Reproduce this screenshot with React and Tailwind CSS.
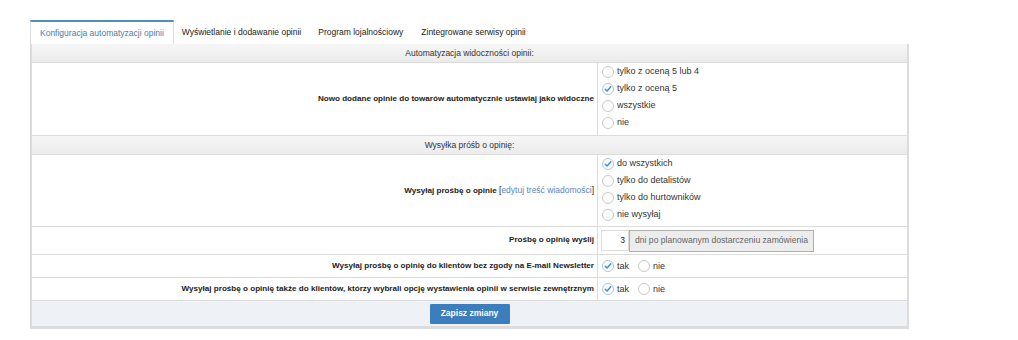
import React from "react";

function Radio({ checked }) {
  return (
    <span
      className={`inline-flex items-center justify-center w-[12px] h-[12px] rounded-full border bg-white shrink-0 ${
        checked ? "border-[#a9c6e3]" : "border-[#c9c9c9]"
      }`}
    >
      {checked && (
        <svg width="8" height="8" viewBox="0 0 8 8">
          <path d="M1.2 4.2 L3.1 6 L6.8 1.8" fill="none" stroke="#3d8bd0" strokeWidth="1.4" strokeLinecap="round" strokeLinejoin="round" />
        </svg>
      )}
    </span>
  );
}

function Opt({ checked, label }) {
  return (
    <div className="flex items-center h-[17px] gap-[3px]">
      <Radio checked={checked} />
      <span className="text-[#333] text-[9px]">{label}</span>
    </div>
  );
}

function Header({ children }) {
  return (
    <div className="h-[19px] flex items-center justify-center bg-gradient-to-b from-[#f6f6f6] to-[#ebebeb] border-b border-[#dcdcdc] text-[#333]">
      {children}
    </div>
  );
}

function Row({ label, children, h, valueClass = "" }) {
  return (
    <div className={`flex border-b border-[#dcdcdc] ${h}`}>
      <div className="w-[566px] shrink-0 flex items-center justify-end pr-[3px] border-r border-[#dcdcdc] font-bold text-[#222] text-[8.1px]">
        {label}
      </div>
      <div className={`flex-1 pl-[4px] ${valueClass}`}>{children}</div>
    </div>
  );
}

function YesNo() {
  return (
    <div className="flex items-center h-full gap-[9px]">
      <Opt checked label="tak" />
      <Opt label="nie" />
    </div>
  );
}

export default function App() {
  return (
    <div className="bg-white w-[1018px] h-[340px] pt-[20px] pl-[30px] text-[8.5px] leading-none" style={{ fontFamily: '"Liberation Sans", Arial, sans-serif' }}>
      <div className="w-[879px]">
        <div className="flex h-[24px]">
          <div className="h-full px-[9px] flex items-center border-t-2 border-t-[#4f8fc0] border-x border-x-[#dcdcdc] bg-white text-[#4a7db0]">
            Konfiguracja automatyzacji opinii
          </div>
          <div className="h-full px-[8px] flex items-center text-[#222]">Wyświetlanie i dodawanie opinii</div>
          <div className="h-full px-[9px] flex items-center text-[#222]">Program lojalnościowy</div>
          <div className="h-full px-[9px] flex items-center text-[#222]">Zintegrowane serwisy opinii</div>
        </div>
        <div className="border-l-2 border-r-2 border-b-[3px] border-[#dcdcdc]">
          <Header>Automatyzacja widoczności opinii:</Header>
          <Row label="Nowo dodane opinie do towarów automatycznie ustawiaj jako widoczne" h="h-[73px]">
            <Opt label="tylko z oceną 5 lub 4" />
            <Opt checked label="tylko z oceną 5" />
            <Opt label="wszystkie" />
            <Opt label="nie" />
          </Row>
          <Header>Wysyłka próśb o opinię:</Header>
          <Row
            label={
              <span>
                Wysyłaj prośbę o opinie{" "}
                <span className="font-normal text-[#222] text-[8.5px]">[</span>
                <span className="font-normal text-[#5b86c0] text-[8.5px]">edytuj treść wiadomości</span>
                <span className="font-normal text-[#222] text-[8.5px]">]</span>
              </span>
            }
            h="h-[72px]"
          >
            <Opt checked label="do wszystkich" />
            <Opt label="tylko do detalistów" />
            <Opt label="tylko do hurtowników" />
            <Opt label="nie wysyłaj" />
          </Row>
          <Row label="Prośbę o opinię wyślij" h="h-[28px]" valueClass="flex items-center">
            <div className="flex items-center -ml-[1px]">
              <div className="w-[28px] h-[21px] border border-[#dcdcdc] bg-white flex items-center justify-end pr-[3px] text-[#222]">3</div>
              <div className="h-[22px] border border-[#b0b0b0] bg-[#ececec] px-[5px] flex items-center text-[#666] text-[8.6px]">
                dni po planowanym dostarczeniu zamówienia
              </div>
            </div>
          </Row>
          <Row label="Wysyłaj prośbę o opinię do klientów bez zgody na E-mail Newsletter" h="h-[23px]">
            <YesNo />
          </Row>
          <Row label="Wysyłaj prośbę o opinię także do klientów, którzy wybrali opcję wystawienia opinii w serwisie zewnętrznym" h="h-[23px]">
            <YesNo />
          </Row>
          <div className="h-[25px] bg-[#eef1f6] flex items-center justify-center">
            <button className="w-[80px] h-[20px] bg-[#3b7dbd] text-white font-bold rounded-[1px]">Zapisz zmiany</button>
          </div>
        </div>
      </div>
    </div>
  );
}
